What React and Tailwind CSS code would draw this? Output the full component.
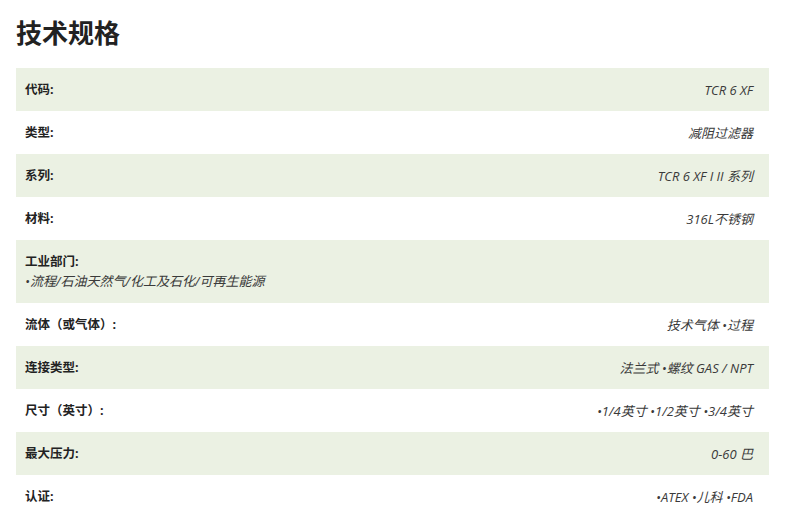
import React from 'react'

const specs = [
  { label: '代码:', value: 'TCR 6 XF' },
  { label: '类型:', value: '减阻过滤器' },
  { label: '系列:', value: 'TCR 6 XF I II 系列' },
  { label: '材料:', value: '316L不锈钢' },
  { label: '工业部门:', value: '•流程/石油天然气/化工及石化/可再生能源', stacked: true },
  { label: '流体（或气体）:', value: '技术气体 •过程' },
  { label: '连接类型:', value: '法兰式 •螺纹 GAS / NPT' },
  { label: '尺寸（英寸）:', value: '•1/4英寸 •1/2英寸 •3/4英寸' },
  { label: '最大压力:', value: '0-60 巴' },
  { label: '认证:', value: '•ATEX •儿科 •FDA' },
]

function SpecRow({ label, value, stacked, shaded }) {
  const bg = shaded ? 'bg-[#ebf1e3]' : 'bg-white'
  if (stacked) {
    return (
      <div className={`${bg} h-[63px] pl-[9px] pr-4 flex flex-col justify-center`}>
        <span className="font-bold text-[#222]">{label}</span>
        <span className="italic text-[13px] text-[#3a3a3a] mt-[1px]">{value}</span>
      </div>
    )
  }
  return (
    <div className={`${bg} h-[43px] pl-[9px] pr-4 flex items-center justify-between`}>
      <span className="font-bold text-[#222]">{label}</span>
      <span className="italic text-[13px] text-[#3a3a3a]">{value}</span>
    </div>
  )
}

export default function App() {
  return (
    <div className="bg-white w-[800px] h-[523px] overflow-hidden px-4 pt-[14px] font-['Open_Sans','Noto_Sans_CJK_SC',sans-serif]">
      <h1 className="text-[26px] font-bold text-[#222] leading-[36px] font-['Noto_Sans_CJK_SC',sans-serif]">技术规格</h1>
      <div className="mt-[18px] w-[753px] text-[12.5px] leading-[18px]">
        {specs.map((s, i) => (
          <SpecRow key={s.label} {...s} shaded={i % 2 === 0} />
        ))}
      </div>
    </div>
  )
}
